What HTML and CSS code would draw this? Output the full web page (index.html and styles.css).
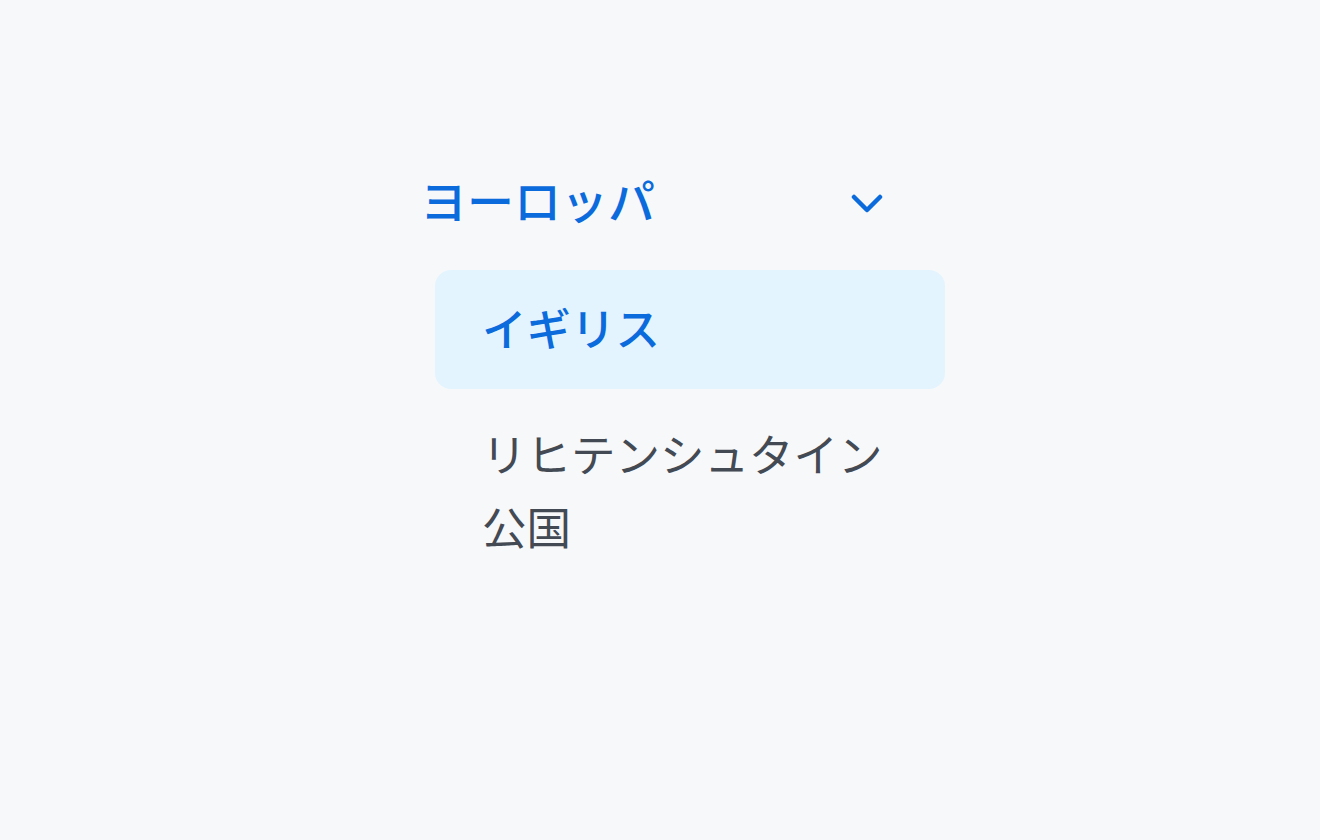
FILE: index.html
```html
<!DOCTYPE html>
<html lang="ja">
<head>
    <meta charset="UTF-8">
    <meta name="viewport" content="width=device-width, initial-scale=1.0">
    <title>ヨーロッパ</title>
    <link rel="stylesheet" href="styles.css">
</head>
<body>

<nav class="side-nav">
    <div class="group-head">
        <span class="group-title">ヨーロッパ</span>
        <svg class="chevron" viewBox="0 0 32 20" width="32" height="20">
            <path d="M3 3 L16 16 L29 3" fill="none" stroke="currentColor" stroke-width="4.5" stroke-linecap="round" stroke-linejoin="round"/>
        </svg>
    </div>
    <ul class="group-list">
        <li class="nav-item active">イギリス</li>
        <li class="nav-item">リヒテンシュタイン公国</li>
    </ul>
</nav>

</body>
</html>
```

FILE: styles.css
```css
body {
    margin: 0;
    background-color: #f7f8fa;
    font-family: "Noto Sans CJK JP", "Noto Sans", sans-serif;
}
.side-nav {
    width: 525px;
    margin-left: 420px;
    padding-top: 156px;
}
.group-head {
    display: flex;
    align-items: center;
    justify-content: space-between;
    height: 84px;
    padding-right: 62px;
}
.group-title {
    font-size: 47px;
    font-weight: 500;
    color: #0b6bdc;
}
.chevron {
    color: #0b6bdc;
    margin-top: 12px;
}
.group-list {
    list-style: none;
    margin: 30px 0 0 15px;
    padding: 0;
}
.nav-item {
    padding: 21px 47px 27px;
    font-size: 44.5px;
    line-height: 71px;
    color: #434a54;
    border-radius: 16px;
}
.nav-item + .nav-item {
    margin-top: 6px;
    padding-top: 21px;
    line-height: 73px;
}
.nav-item.active {
    background-color: #e3f4fe;
    color: #0b6bdc;
    font-weight: 500;
}
```
